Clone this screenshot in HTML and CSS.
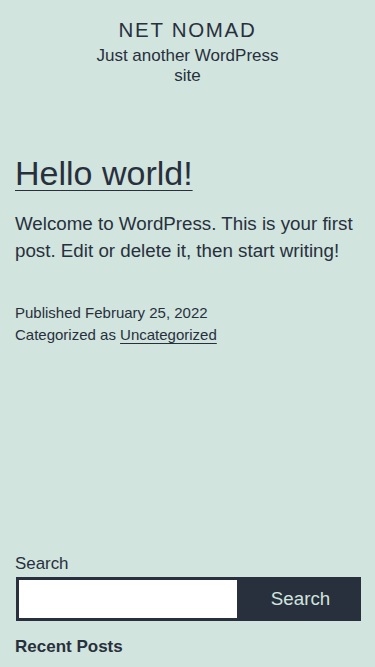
FILE: index.html
```html
<!DOCTYPE html>
<html lang="en">
<head>
    <meta charset="UTF-8">
    <meta name="viewport" content="width=device-width,initial-scale=1">
    <title>NET NOMAD</title>
    <link rel="stylesheet" href="styles.css">
</head>
<body>
<header class="site-header">
    <p class="site-title">NET NOMAD</p>
    <p class="site-description">Just another WordPress site</p>
</header>
<main class="site-main">
    <article class="post">
        <h2 class="entry-title"><a href="#">Hello world!</a></h2>
        <div class="entry-content">
            <p>Welcome to WordPress. This is your first post. Edit or delete it, then start writing!</p>
        </div>
        <footer class="entry-footer">
            <div class="posted-on">Published February 25, 2022</div>
            <div class="cat-links">Categorized as <a href="#">Uncategorized</a></div>
        </footer>
    </article>
</main>
<aside class="widget-area">
    <form class="search-form">
        <label for="s" class="search-label">Search</label>
        <div class="search-row">
            <input type="search" id="s" class="search-field">
            <button type="submit" class="search-submit">Search</button>
        </div>
    </form>
    <h2 class="widget-title">Recent Posts</h2>
</aside>
</body>
</html>
```

FILE: styles.css
```css
* {
    margin: 0;
    padding: 0;
    box-sizing: border-box;
}

body {
    background: #d1e4dd;
    color: #28303d;
    font-family: "Liberation Sans", Arial, sans-serif;
}

a {
    color: inherit;
    text-decoration: underline;
    text-decoration-thickness: 1px;
    text-underline-offset: 3px;
}

.site-header {
    text-align: center;
    padding: 17px 15px 0;
}

.site-title {
    font-size: 20.5px;
    line-height: 26px;
    letter-spacing: 1.7px;
}

.site-description {
    font-size: 17px;
    line-height: 20px;
    max-width: 200px;
    margin: 3px auto 0;
}

.site-main {
    padding: 0 15px;
    margin-top: 65px;
}

.entry-title {
    font-size: 34px;
    font-weight: normal;
    line-height: 44px;
}

.entry-title a {
    text-underline-offset: 5px;
}

.entry-content {
    margin-top: 15px;
    font-size: 18.75px;
    line-height: 27px;
}

.entry-footer {
    margin-top: 38px;
    font-size: 15px;
    line-height: 22px;
}

.widget-area {
    padding: 0 15px;
    margin-top: 207px;
}

.search-label {
    display: block;
    font-size: 16.9px;
    line-height: 22px;
    margin-bottom: 2px;
}

.search-row {
    display: flex;
    margin: 0 -1px 0 1px;
}

.search-field {
    flex: 1;
    height: 44px;
    border: 3px solid #28303d;
    background: #fff;
    font: inherit;
}

.search-submit {
    width: 121px;
    height: 44px;
    border: 0;
    background: #28303d;
    color: #d1e4dd;
    font-family: inherit;
    font-size: 18.75px;
}

.widget-title {
    margin-top: 15px;
    font-size: 17px;
    line-height: 22px;
}
```
